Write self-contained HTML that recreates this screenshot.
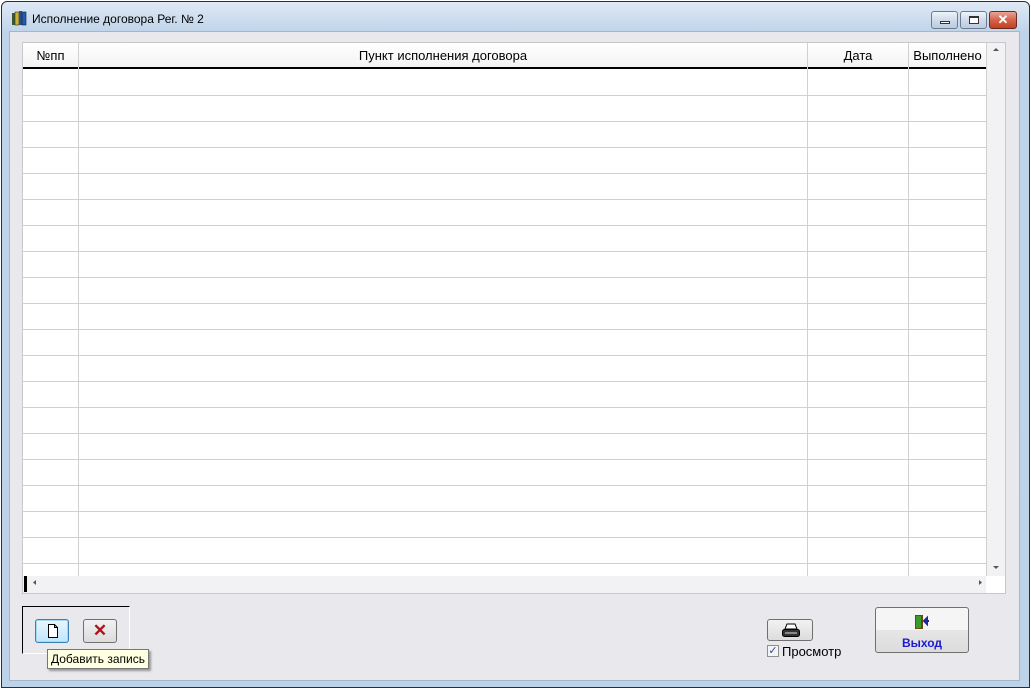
<!DOCTYPE html>
<html><head><meta charset="utf-8"><style>
*{margin:0;padding:0;box-sizing:border-box}
body{width:1031px;height:688px;overflow:hidden;background:#fff;font-family:"Liberation Sans",sans-serif;font-size:12px;position:relative}
.abs{position:absolute}
#win{left:1px;top:1px;width:1029px;height:687px;border:1px solid #2b2f36;border-radius:6px 6px 0 0;background:linear-gradient(#dfe9f5,#bfd4ea 30px,#bcd3ea);}
#client{left:9px;top:31px;width:1011px;height:650px;background:#e8e8ed;border:1px solid #a6b6c9}
.tb{top:11px;height:18px;border:1px solid #6c7b90;border-radius:3px;background:linear-gradient(#eef3f9,#cfdbe9 50%,#bccbe0)}
.hd{font-size:13px;top:48px}
</style></head><body>
<div id="win" class="abs"></div>
<div class="abs" style="left:11px;top:10px;width:16px;height:16px">
<svg width="16" height="16"><rect x="1" y="3" width="3" height="12" fill="#3a5a2a"/><rect x="4" y="2" width="4" height="13" fill="#c8b23a" stroke="#333" stroke-width=".6"/><rect x="8" y="1" width="3" height="14" fill="#2a4f8a"/><rect x="11" y="2" width="4" height="13" fill="#2160b0" stroke="#123" stroke-width=".6"/></svg></div>
<div class="abs" style="left:32px;top:12px;font-size:12px;color:#000">Исполнение договора Рег. № 2</div>
<div class="abs tb" style="left:931px;width:27px"><div class="abs" style="left:8px;top:9px;width:10px;height:3px;border:1px solid #333;background:#fff"></div></div>
<div class="abs tb" style="left:960px;width:27px"><div class="abs" style="left:8px;top:4px;width:10px;height:8px;border:1px solid #333;border-top-width:2px;background:#fff"></div></div>
<div class="abs" style="left:989px;top:11px;width:28px;height:18px;border:1px solid #6b2a20;border-radius:3px;background:linear-gradient(#e8a596,#d5634c 50%,#c2401f);color:#fff;font-weight:bold;font-size:13px;text-align:center;line-height:16px">✕</div>
<div id="client" class="abs"></div>
<div class="abs" style="left:22px;top:42px;width:984px;height:552px;background:#fff;border:1px solid #c8c8c8"></div>
<div class="abs" style="left:23px;top:43px;width:963px;height:26px;background:linear-gradient(#fff,#f3f3f5);border-bottom:2px solid #000"></div>
<svg class="abs" style="left:0;top:0" width="1031" height="688">
<g stroke="#d0d0d0" stroke-width="1">
<line x1="78.5" y1="43" x2="78.5" y2="576"/><line x1="807.5" y1="43" x2="807.5" y2="576"/><line x1="908.5" y1="43" x2="908.5" y2="576"/><line x1="986.5" y1="43" x2="986.5" y2="576"/>
<line x1="23" y1="95.5" x2="986" y2="95.5"/><line x1="23" y1="121.5" x2="986" y2="121.5"/><line x1="23" y1="147.5" x2="986" y2="147.5"/><line x1="23" y1="173.5" x2="986" y2="173.5"/><line x1="23" y1="199.5" x2="986" y2="199.5"/><line x1="23" y1="225.5" x2="986" y2="225.5"/><line x1="23" y1="251.5" x2="986" y2="251.5"/><line x1="23" y1="277.5" x2="986" y2="277.5"/><line x1="23" y1="303.5" x2="986" y2="303.5"/><line x1="23" y1="329.5" x2="986" y2="329.5"/><line x1="23" y1="355.5" x2="986" y2="355.5"/><line x1="23" y1="381.5" x2="986" y2="381.5"/><line x1="23" y1="407.5" x2="986" y2="407.5"/><line x1="23" y1="433.5" x2="986" y2="433.5"/><line x1="23" y1="459.5" x2="986" y2="459.5"/><line x1="23" y1="485.5" x2="986" y2="485.5"/><line x1="23" y1="511.5" x2="986" y2="511.5"/><line x1="23" y1="537.5" x2="986" y2="537.5"/><line x1="23" y1="563.5" x2="986" y2="563.5"/>
</g>
<rect x="23" y="576" width="963" height="17" fill="#f2f2f4"/>
<rect x="987" y="43" width="18" height="533" fill="#f2f2f4"/>
<rect x="24" y="576" width="3" height="16" fill="#000"/>
<path d="M36 585 L33 582.5 L36 580Z" fill="#555"/>
<path d="M979 580 L982 582.5 L979 585Z" fill="#555"/>
<path d="M993 51 L996 48 L999 51Z" fill="#555"/>
<path d="M993 566 L996 569 L999 566Z" fill="#555"/>
</svg>
<div class="abs hd" style="left:23px;width:55px;text-align:center">№пп</div>
<div class="abs hd" style="left:79px;width:728px;text-align:center">Пункт исполнения договора</div>
<div class="abs hd" style="left:808px;width:100px;text-align:center">Дата</div>
<div class="abs hd" style="left:909px;width:77px;text-align:center">Выполнено</div>
<div class="abs" style="left:22px;top:606px;width:108px;height:48px;border-left:1px solid #000;border-top:1px solid #000;border-right:1px solid #fff;border-bottom:1px solid #fff"></div>
<div class="abs" style="left:35px;top:619px;width:34px;height:24px;border:1px solid #3c7fb1;border-radius:3px;background:linear-gradient(#eaf6fd,#bee6fd);box-shadow:inset 0 0 0 1px #a7d9f5"><svg class="abs" style="left:11px;top:4px" width="12" height="14"><path d="M1.5 .5H7.5L10.5 3.5V13.5H1.5Z M7.5 .5V3.5H10.5" fill="#fff" stroke="#000"/></svg></div>
<div class="abs" style="left:83px;top:619px;width:34px;height:24px;border:1px solid #707070;border-radius:3px;background:linear-gradient(#f2f2f2,#dcdcdc);color:#b0101a;font-size:17px;font-weight:bold;text-align:center;line-height:22px">✕</div>
<div class="abs" style="left:47px;top:649px;height:20px;padding:0 3px;border:1px solid #767676;background:#ffffe1;box-shadow:2px 2px 2px rgba(0,0,0,.35);line-height:18px;font-size:12px">Добавить запись</div>
<div class="abs" style="left:767px;top:619px;width:46px;height:22px;border:1px solid #707070;border-radius:3px;background:linear-gradient(#f2f2f2,#dcdcdc)"><svg class="abs" style="left:13px;top:3px" width="20" height="16"><path d="M6 1h8l2 5H4Z" fill="#fff" stroke="#000"/><rect x="1.5" y="6.5" width="17" height="7" rx="2" fill="#333" stroke="#000"/><rect x="4" y="9" width="12" height="2" fill="#888"/></svg></div>
<div class="abs" style="left:767px;top:645px;width:12px;height:12px;border:1px solid #8e8f8f;background:#f4f4f4;font-size:11px;line-height:10px;color:#2a4a9a;text-align:center">✓</div>
<div class="abs" style="left:782px;top:644px;font-size:13px">Просмотр</div>
<div class="abs" style="left:875px;top:607px;width:94px;height:46px;border:1px solid #707070;border-radius:3px;background:linear-gradient(#f5f5f5 50%,#e6e6e6 50%,#dcdcdc)"><svg class="abs" style="left:38px;top:6px" width="18" height="16"><rect x="1" y="1" width="8" height="14" fill="#6a4a10"/><rect x="2" y="2" width="5" height="12" fill="#3a9a2a"/><path d="M10 7h5M10 7l3-3v6z" stroke="#1a2a9a" stroke-width="2" fill="#1a2a9a"/></svg><div class="abs" style="left:0;top:28px;width:92px;text-align:center;color:#1a1ad0;font-weight:bold;font-size:12px">Выход</div></div>
</body></html>
